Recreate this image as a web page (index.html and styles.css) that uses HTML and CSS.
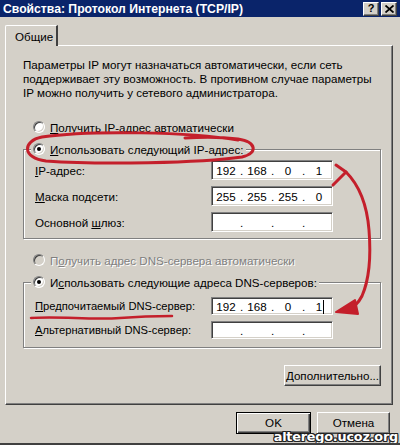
FILE: index.html
```html
<!DOCTYPE html>
<html lang="ru">
<head>
<meta charset="utf-8">
<title>Свойства: Протокол Интернета (TCP/IP)</title>
<link rel="stylesheet" href="styles.css">
</head>
<body>
<div class="window">
  <div class="titlebar">
    <span class="title">Свойства: Протокол Интернета (TCP/IP)</span>
    <div class="caption-btns">
      <span class="cbtn">?</span>
      <span class="cbtn cbtn-close">
        <svg width="9" height="8" viewBox="0 0 9 8"><path d="M0.5 0.5 L8.5 7.5 M8.5 0.5 L0.5 7.5" stroke="#000" stroke-width="1.8"/></svg>
      </span>
    </div>
  </div>
  <div class="content">
    <div class="tabs"><div class="tab">Общие</div></div>
    <div class="panel">
      <p class="intro">Параметры IP могут назначаться автоматически, если сеть<br>поддерживает эту возможность. В противном случае параметры<br>IP можно получить у сетевого администратора.</p>

      <div class="radio radio-outer"><span class="rb"></span><span><u>П</u>олучить IP-адрес автоматически</span></div>

      <fieldset class="group group-ip">
        <legend><span class="radio"><span class="rb checked"></span><span><u>И</u>спользовать следующий IP-адрес:</span></span></legend>
        <div class="rows rows-ip">
          <div class="row"><span class="lbl"><u>I</u>P-адрес:</span>
            <div class="ipbox"><span class="seg">192</span><span class="dot">.</span><span class="seg">168</span><span class="dot">.</span><span class="seg">0</span><span class="dot">.</span><span class="seg">1</span></div></div>
          <div class="row"><span class="lbl"><u>М</u>аска подсети:</span>
            <div class="ipbox"><span class="seg">255</span><span class="dot">.</span><span class="seg">255</span><span class="dot">.</span><span class="seg">255</span><span class="dot">.</span><span class="seg">0</span></div></div>
          <div class="row"><span class="lbl">Основной <u>ш</u>люз:</span>
            <div class="ipbox"><span class="seg"></span><span class="dot">.</span><span class="seg"></span><span class="dot">.</span><span class="seg"></span><span class="dot">.</span><span class="seg"></span></div></div>
        </div>
      </fieldset>

      <div class="radio radio-outer radio-dns disabled"><span class="rb"></span><span>П<u>о</u>лучить адрес DNS-сервера автоматически</span></div>

      <fieldset class="group group-dns">
        <legend><span class="radio"><span class="rb checked"></span><span>И<u>с</u>пользовать следующие адреса DNS-серверов:</span></span></legend>
        <div class="rows rows-dns">
          <div class="row"><span class="lbl lbl-dns"><u>П</u>редпочитаемый DNS-сервер:</span>
            <div class="ipbox"><span class="seg">192</span><span class="dot">.</span><span class="seg">168</span><span class="dot">.</span><span class="seg">0</span><span class="dot">.</span><span class="seg seg-caret">1<span class="caret"></span></span></div></div>
          <div class="row"><span class="lbl lbl-dns"><u>А</u>льтернативный DNS-сервер:</span>
            <div class="ipbox"><span class="seg"></span><span class="dot">.</span><span class="seg"></span><span class="dot">.</span><span class="seg"></span><span class="dot">.</span><span class="seg"></span></div></div>
        </div>
      </fieldset>

      <div class="adv-row"><button class="btn btn-adv"><u>Д</u>ополнительно...</button></div>
    </div>
    <div class="footer">
      <button class="btn btn-default">OK</button>
      <button class="btn">Отмена</button>
    </div>
  </div>

  <svg class="annot" width="400" height="445" viewBox="0 0 400 445">
    <g fill="none" stroke="#c41f2b" stroke-width="3" stroke-linecap="round" stroke-linejoin="round">
      <path d="M238 140 C190 132 90 130 42 137 C22 141 22 158 46 161 C100 165 200 163 242 157 C258 153 257 142 238 139 C215 136 200 137 185 138"/>
      <path d="M336 165 L346 172 L333 185"/>
      <path d="M346 172 C360 186 367 205 369 230 C371 255 369 280 362 296 C358 304 352 309 345 311"/>
      <path d="M31 318 C60 316 90 320 120 318 C145 316 160 316 172 316" stroke-width="2.5"/>
    </g>
    <path d="M336 312 L355 300 L358 314 Z" fill="#c41f2b" stroke="#c41f2b" stroke-width="2" stroke-linejoin="round"/>
  </svg>
  <div class="watermark">alterego.ucoz.org</div>
</div>
</body>
</html>
```

FILE: styles.css
```css
* { box-sizing: border-box; }
html, body { margin: 0; padding: 0; }
body {
  background: #d4d0c8;
  font-family: "Liberation Sans", Arial, sans-serif;
  font-size: 11.6px;
  color: #000;
}
u { text-decoration: underline; text-underline-offset: 1px; }

.window {
  position: relative;
  width: 400px;
  height: 445px;
  background: #d4d0c8;
  border-bottom: 2px solid #404040;
  overflow: hidden;
}

.titlebar {
  height: 17px;
  background: #0a246a;
  display: flex;
  align-items: center;
  justify-content: space-between;
  padding: 0 3px 0 3px;
}
.title {
  color: #fff;
  font-weight: bold;
  font-size: 12.2px;
}
.caption-btns { display: flex; gap: 2px; }
.cbtn {
  width: 16px;
  height: 14px;
  background: #d4d0c8;
  border: 1px solid;
  border-color: #fff #404040 #404040 #fff;
  box-shadow: inset -1px -1px #808080;
  display: flex;
  align-items: center;
  justify-content: center;
  font-weight: bold;
  font-size: 11px;
  line-height: 1;
}

.content {
  padding: 8px 7px 0 5px;
}
.tabs { display: flex; height: 20px; }
.tab {
  width: 53px;
  height: 21px;
  padding: 4px 0 0 9px;
  border-top: 1px solid #fff;
  border-left: 1px solid #fff;
  border-right: 2px solid #404040;
  border-top-left-radius: 2px;
  background: #d4d0c8;
  position: relative;
  z-index: 1;
}
.panel {
  height: 360px;
  border-top: 1px solid #fff;
  border-left: 1px solid #fff;
  border-right: 1px solid #404040;
  border-bottom: 1px solid #404040;
  box-shadow: inset -1px -1px #808080;
  padding: 12px 11px 0 17px;
}
.intro {
  margin: 0;
  line-height: 14px;
  white-space: nowrap;
}

.radio {
  display: flex;
  align-items: center;
  height: 16px;
  gap: 5px;
  white-space: nowrap;
}
.radio-outer { margin: 19px 0 0 10px; }
.radio-dns { margin-top: 13px; }
.rb {
  width: 12px;
  height: 12px;
  border-radius: 50%;
  background: #fff;
  border: 1px solid;
  border-color: #808080 #fff #fff #808080;
  box-shadow: inset 1px 1px #404040, inset -1px -1px #d4d0c8;
  position: relative;
  flex: none;
}
.rb.checked::after {
  content: "";
  position: absolute;
  left: 3px;
  top: 3px;
  width: 4px;
  height: 4px;
  border-radius: 50%;
  background: #000;
}
.disabled { color: #808080; text-shadow: 1px 1px #fff; }
.disabled .rb { background: #d4d0c8; }

.group {
  margin: 6px 0 0 0;
  padding: 0;
  border: 1px solid #808080;
  box-shadow: inset 1px 1px #fff, 1px 1px #fff;
  min-inline-size: 0;
}
.group legend {
  margin-left: 7px;
  padding: 0 2px;
  background: #d4d0c8;
}
.rows { display: flex; flex-direction: column; padding: 0 0 0 11px; }
.rows-ip { gap: 6px; padding-top: 3px; padding-bottom: 6px; }
.rows-dns { gap: 6px; padding-top: 7px; padding-bottom: 8px; }
.row { display: flex; align-items: center; height: 20px; }
.rows-dns .row { height: 18px; }
.lbl { width: 176px; flex: none; white-space: nowrap; }
.lbl-dns { font-size: 11.2px; }
.ipbox {
  width: 122px;
  height: 20px;
  flex: none;
  background: #fff;
  border: 1px solid;
  border-color: #808080 #fff #fff #808080;
  box-shadow: inset 1px 1px #404040, inset -1px -1px #d4d0c8;
  display: flex;
  align-items: center;
  padding-left: 2px;
}
.rows-dns .ipbox { height: 18px; }
.seg { width: 24px; text-align: center; }
.dot { width: 7px; text-align: center; }
.seg-caret { position: relative; }
.caret {
  position: absolute;
  top: 0;
  left: 16px;
  width: 1px;
  height: 14px;
  background: #000;
}

.adv-row { display: flex; justify-content: flex-end; margin-top: 17px; }
.btn {
  font-family: "Liberation Sans", Arial, sans-serif;
  font-size: 11.6px;
  color: #000;
  background: #d4d0c8;
  border: 1px solid;
  border-color: #fff #404040 #404040 #fff;
  box-shadow: inset -1px -1px #808080;
  padding: 0 0 1px 0;
  height: 22px;
  width: 73px;
}
.btn-adv { width: 97px; height: 21px; padding: 0; }
.btn-default {
  border: 1px solid #000;
  box-shadow: inset 1px 1px #fff, inset -1px -1px #404040, inset -2px -2px #808080;
  width: 75px;
}
.footer {
  display: flex;
  justify-content: flex-end;
  gap: 6px;
  margin-top: 7px;
  padding-right: 3px;
}

.annot {
  position: absolute;
  left: 0;
  top: 0;
  pointer-events: none;
}
.watermark {
  position: absolute;
  right: 2px;
  bottom: -1px;
  font-family: "DejaVu Sans", Verdana, sans-serif;
  font-weight: bold;
  font-size: 12.8px;
  color: #fff;
  letter-spacing: -0.2px;
  text-shadow: 1px 0 #222, -1px 0 #222, 0 1px #222, 0 -1px #222, 1px 1px #222, -1px -1px #222, 1px -1px #222, -1px 1px #222;
}
```
